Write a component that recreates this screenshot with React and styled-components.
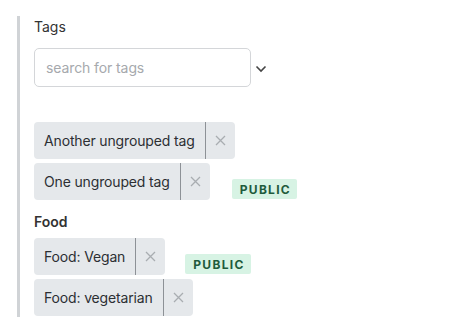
import React from "react";
import styled, { createGlobalStyle } from "styled-components";

const Global = createGlobalStyle`
  html, body { margin: 0; padding: 0; background: #fff; }
  body { font-family: Inter, "Liberation Sans", sans-serif; color: #333; }
`;

const Page = styled.div`
  padding: 16px 0 0 17px;
  height: 317px;
  box-sizing: border-box;
  overflow: hidden;
`;

const Section = styled.div`
  border-left: 3px solid #d0d3d6;
  padding: 0 0 0 14px;
  height: 301px;
  overflow: hidden;
  display: flex;
  flex-direction: column;
`;

const Label = styled.div`
  font-size: 14px;
  line-height: 18px;
  margin-top: ${(p) => p.$mt}px;
  color: #333;
  font-weight: ${(p) => (p.$bold ? 600 : 400)};
`;

const SearchRow = styled.div`
  display: flex;
  align-items: center;
  margin-top: 12px;
`;

const Input = styled.input`
  width: 217px;
  height: 39px;
  box-sizing: border-box;
  border: 1px solid #d4d6d9;
  border-radius: 5px;
  padding: 0 11px;
  font: inherit;
  font-size: 14px;
  letter-spacing: -0.1px;
  outline: none;
  &::placeholder { color: #a6a9ad; }
`;

const Chevron = styled.svg`
  width: 12px;
  height: 8px;
  margin-left: 4px;
  margin-top: 2px;
`;

const Group = styled.div`
  display: flex;
  flex-direction: column;
  gap: 4px;
  margin-top: ${(p) => p.$mt}px;
`;

const Row = styled.div`
  display: flex;
  align-items: flex-end;
`;

const Chip = styled.div`
  display: flex;
  align-items: stretch;
  height: 37px;
  background: #e5e8eb;
  border-radius: 4px;
  font-size: 14px;
  letter-spacing: -0.15px;
  color: #2c2f33;
`;

const ChipText = styled.span`
  display: flex;
  align-items: center;
  padding: 0 10px;
  border-right: 1px solid #8d9196;
`;

const ChipClose = styled.span`
  display: flex;
  align-items: center;
  justify-content: center;
  width: 29px;
`;

const Badge = styled.span`
  margin-left: ${(p) => p.$ml}px;
  margin-bottom: 1px;
  height: 20px;
  padding: 0 6px 0 8px;
  display: flex;
  align-items: center;
  background: #d7f3e4;
  color: #1f5b3c;
  font-size: 12px;
  font-weight: 700;
  letter-spacing: 1.3px;
  border-radius: 2px;
`;

const X = () => (
  <svg width="11" height="11" viewBox="0 0 11 11">
    <path d="M1 1L10 10M10 1L1 10" stroke="#a9adb1" strokeWidth="1.3" fill="none" />
  </svg>
);

const Tag = ({ children }) => (
  <Chip>
    <ChipText>{children}</ChipText>
    <ChipClose><X /></ChipClose>
  </Chip>
);

export default function App() {
  return (
    <>
      <Global />
      <Page>
        <Section>
          <Label $mt={2}>Tags</Label>
          <SearchRow>
            <Input placeholder="search for tags" />
            <Chevron viewBox="0 0 12 8">
              <path d="M1.5 1.5L6 6L10.5 1.5" stroke="#444" strokeWidth="1.6" fill="none" />
            </Chevron>
          </SearchRow>
          <Group $mt={35}>
            <Row><Tag>Another ungrouped tag</Tag></Row>
            <Row><Tag>One ungrouped tag</Tag><Badge $ml={22}>PUBLIC</Badge></Row>
          </Group>
          <Label $bold $mt={13}>Food</Label>
          <Group $mt={7}>
            <Row><Tag>Food: Vegan</Tag><Badge $ml={20}>PUBLIC</Badge></Row>
            <Row><Tag>Food: vegetarian</Tag></Row>
          </Group>
        </Section>
      </Page>
    </>
  );
}
